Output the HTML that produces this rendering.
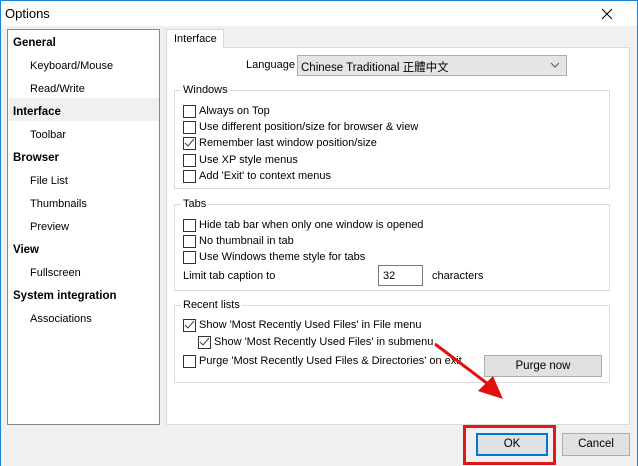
<!DOCTYPE html>
<html><head><style>
*{margin:0;padding:0;box-sizing:border-box}
body{width:638px;height:466px;overflow:hidden;font-family:"Liberation Sans","Noto Sans CJK TC",sans-serif;font-size:11px;color:#000;background:#f0f0f0;position:relative}
.a{position:absolute}
.win{left:0;top:0;width:638px;height:466px;border:1px solid #1883d7;border-bottom:none}
.title{left:1px;top:1px;width:636px;height:25px;background:#fff}
.lp{left:7px;top:29px;width:153px;height:396px;background:#fff;border:1px solid #828790;font-size:11px}
.lp div{position:absolute;white-space:nowrap}
.b{font-weight:bold;left:5px;font-size:11.5px}
.s{left:22px}
.panel{left:166px;top:47px;width:464px;height:378px;background:#fff;border:1px solid #d9d9d9}
.tab{left:166px;top:29px;width:58px;height:19px;background:#fff;border:1px solid #d9d9d9;border-bottom:none;padding:3px 0 0 7px}
.grp{border:1px solid #dcdcdc;left:174px;width:436px}
.gl{background:#fff;padding:0 2px;left:181px}
.cb{width:13px;height:13px;border:1px solid #333;background:#fff}
.t{white-space:nowrap}
.btn{background:#e1e1e1;border:1px solid #adadad;text-align:center}
</style></head><body>
<div class="a win"></div>
<div class="a title"></div>
<div class="a t" style="left:5px;top:6px;font-size:13px;color:#000">Options</div>
<svg class="a" style="left:599px;top:6px" width="16" height="16"><path d="M3 3L13 13M13 3L3 13" stroke="#000" stroke-width="1"/></svg>
<div class="a lp">
<div style="left:1px;top:68px;width:150px;height:23px;background:#f0f0f0"></div>
<div class="b" style="top:7px">General</div>
<div class="s" style="top:30px">Keyboard/Mouse</div>
<div class="s" style="top:53px">Read/Write</div>
<div class="b" style="top:76px">Interface</div>
<div class="s" style="top:99px">Toolbar</div>
<div class="b" style="top:122px">Browser</div>
<div class="s" style="top:145px">File List</div>
<div class="s" style="top:168px">Thumbnails</div>
<div class="s" style="top:191px">Preview</div>
<div class="b" style="top:214px">View</div>
<div class="s" style="top:237px">Fullscreen</div>
<div class="b" style="top:260px">System integration</div>
<div class="s" style="top:283px">Associations</div>
</div>
<div class="a panel"></div>
<div class="a tab">Interface</div>
<div class="a t" style="left:246px;top:59px;font-size:11px">Language</div>
<div class="a" style="left:297px;top:55px;width:270px;height:21px;background:#e5e5e5;border:1px solid #adadad;padding:3px 0 0 3px;color:#000;font-size:11.5px">Chinese Traditional 正體中文
<svg class="a" style="left:252px;top:6px" width="10" height="7"><path d="M1 1L5 5L9 1" stroke="#555" fill="none"/></svg></div>

<div class="a grp" style="top:90px;height:99px"></div>
<div class="a gl" style="top:84px">Windows</div>
<div class="a cb" style="left:183px;top:105px"></div><div class="a t" style="left:199px;top:105px">Always on Top</div>
<div class="a cb" style="left:183px;top:121px"></div><div class="a t" style="left:199px;top:121px">Use different position/size for browser &amp; view</div>
<div class="a cb" style="left:183px;top:137px"></div><div class="a t" style="left:199px;top:137px">Remember last window position/size</div>
<div class="a cb" style="left:183px;top:154px"></div><div class="a t" style="left:199px;top:154px">Use XP style menus</div>
<div class="a cb" style="left:183px;top:170px"></div><div class="a t" style="left:199px;top:170px">Add 'Exit' to context menus</div>

<div class="a grp" style="top:204px;height:87px"></div>
<div class="a gl" style="top:198px">Tabs</div>
<div class="a cb" style="left:183px;top:219px"></div><div class="a t" style="left:199px;top:219px">Hide tab bar when only one window is opened</div>
<div class="a cb" style="left:183px;top:235px"></div><div class="a t" style="left:199px;top:235px">No thumbnail in tab</div>
<div class="a cb" style="left:183px;top:251px"></div><div class="a t" style="left:199px;top:251px">Use Windows theme style for tabs</div>
<div class="a t" style="left:183px;top:270px">Limit tab caption to</div>
<div class="a" style="left:378px;top:265px;width:45px;height:21px;border:1px solid #7a7a7a;background:#fff;padding:4px 0 0 4px">32</div>
<div class="a t" style="left:432px;top:270px">characters</div>

<div class="a grp" style="top:305px;height:78px"></div>
<div class="a gl" style="top:299px">Recent lists</div>
<div class="a cb" style="left:183px;top:319px"></div><div class="a t" style="left:199px;top:319px">Show 'Most Recently Used Files' in File menu</div>
<div class="a cb" style="left:198px;top:336px"></div><div class="a t" style="left:214px;top:336px">Show 'Most Recently Used Files' in submenu</div>
<div class="a cb" style="left:183px;top:355px"></div><div class="a t" style="left:199px;top:355px">Purge 'Most Recently Used Files &amp; Directories' on exit</div>
<div class="a btn" style="left:484px;top:355px;width:118px;height:22px;padding-top:4px;font-size:11.5px">Purge now</div>
<svg class="a" style="left:0;top:0" width="638" height="466">
<path d="M185 143l3 3l6-7M185 325l3 3l6-7M200 342l3 3l6-7" stroke="#444" fill="none"/>
<path d="M435 344L488 384" stroke="#e01010" stroke-width="3"/>
<path d="M503 399L478 391L493 376Z" fill="#e01010"/>
</svg>
<div class="a btn" style="left:476px;top:433px;width:72px;height:23px;border:2px solid #0078d7;padding-top:3px;font-size:11.5px">OK</div>
<div class="a btn" style="left:562px;top:433px;width:68px;height:23px;padding-top:4px;font-size:11.5px">Cancel</div>
<div class="a" style="left:463px;top:425px;width:93px;height:40px;border:3px solid #e3161b"></div>
</body></html>
